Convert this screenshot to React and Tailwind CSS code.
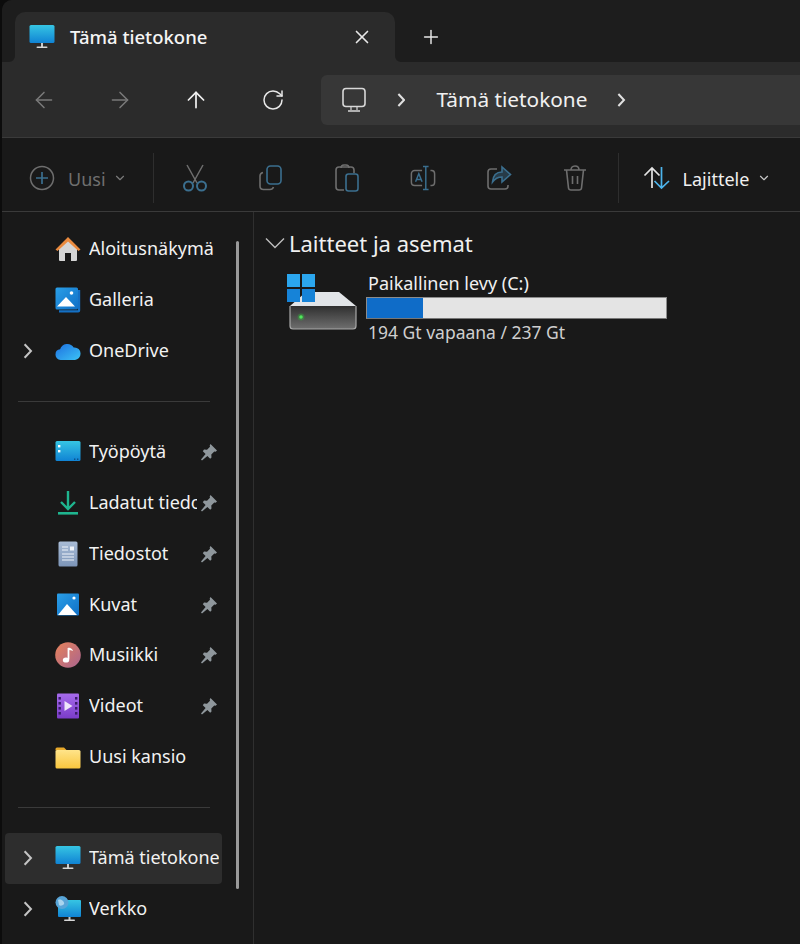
import { ArrowLeft, ArrowRight, ArrowUp, ChevronDown, Plus, RotateCw, X } from 'lucide-react'

const GRAY = '#6e6e6e'
const BLUE = '#3b6f8f'

function Defs() {
  return (
    <svg width="0" height="0" className="absolute">
      <defs>
        <linearGradient id="screen" x1="0" y1="0" x2="0" y2="1">
          <stop offset="0" stopColor="#36c5e3" />
          <stop offset="1" stopColor="#1083d4" />
        </linearGradient>
        <linearGradient id="cloud" x1="0" y1="0" x2="1" y2="1">
          <stop offset="0" stopColor="#1d6fe0" />
          <stop offset="1" stopColor="#3cc3f5" />
        </linearGradient>
        <linearGradient id="doc" x1="0" y1="0" x2="0" y2="1">
          <stop offset="0" stopColor="#a9bcd6" />
          <stop offset="1" stopColor="#7d95b8" />
        </linearGradient>
        <linearGradient id="music" x1="0" y1="0" x2="1" y2="1">
          <stop offset="0" stopColor="#e8835a" />
          <stop offset="1" stopColor="#a9648f" />
        </linearGradient>
        <linearGradient id="video" x1="0" y1="0" x2="0" y2="1">
          <stop offset="0" stopColor="#a66bec" />
          <stop offset="1" stopColor="#7b3cc9" />
        </linearGradient>
        <linearGradient id="folder" x1="0" y1="0" x2="0" y2="1">
          <stop offset="0" stopColor="#ffe48a" />
          <stop offset="1" stopColor="#f9c63e" />
        </linearGradient>
        <linearGradient id="picture" x1="0" y1="0" x2="1" y2="1">
          <stop offset="0" stopColor="#2a9fe8" />
          <stop offset="1" stopColor="#0f6fc6" />
        </linearGradient>
        <linearGradient id="driveBody" x1="0" y1="0" x2="0" y2="1">
          <stop offset="0" stopColor="#2f2f2f" />
          <stop offset="1" stopColor="#6f6f6f" />
        </linearGradient>
      </defs>
    </svg>
  )
}

function MonitorIcon({ size = 26 }) {
  return (
    <svg width={size} height={size} viewBox="0 0 26 26">
      <rect x="0.5" y="1" width="25" height="18" rx="1.5" fill="url(#screen)" />
      <rect x="12" y="19" width="2" height="4" fill="#c9c9c9" />
      <rect x="7.5" y="22.5" width="11" height="1.6" rx="0.8" fill="#d8d8d8" />
    </svg>
  )
}

function MonitorOutline() {
  return (
    <svg width="26" height="26" viewBox="0 0 26 26" fill="none" stroke="#d8d8d8">
      <rect x="2" y="1.500" width="22" height="18" rx="3" strokeWidth="1.600" />
      <path d="M10 20v3M16 20v3" strokeWidth="1.200" />
      <path d="M7 24h12" strokeWidth="1.500" />
    </svg>
  )
}

function Chevron({ height = 16, color = '#c4c4c4', width = 2 }) {
  return (
    <svg width={height * 0.6} height={height} viewBox="0 0 12 20" fill="none" stroke={color} strokeWidth={width * (20 / height)}>
      <path d="M2 1.500 10 10 2 18.500" />
    </svg>
  )
}

function HomeIcon() {
  return (
    <svg width="26" height="26" viewBox="0 0 26 26">
      <path d="M4 12 13 4l9 8v12a1 1 0 0 1-1 1h-5v-8h-6v8H5a1 1 0 0 1-1-1Z" fill="#d5d5d5" />
      <path d="M0.5 13.5 13 1l12.5 12.5-2 1.5L13 5.5 2.5 15Z" fill="#ea8a3e" />
    </svg>
  )
}

function GalleryIcon() {
  return (
    <svg width="26" height="26" viewBox="0 0 26 26">
      <path d="M23 3h2.200v20.500a2 2 0 0 1-2 2H4V23.200h19Z" fill="#1470c4" />
      <rect x="0.5" y="0.5" width="22.500" height="22" rx="1.5" fill="url(#picture)" />
      <circle cx="16.500" cy="6" r="1.800" fill="#fff" />
      <path d="M2 19.500 11 10l9 9.500Z" fill="#fff" />
    </svg>
  )
}

function CloudIcon() {
  return (
    <svg width="26" height="26" viewBox="0 0 26 26">
      <path d="M5.500 22A5.200 5.200 0 0 1 .5 16.500a5.200 5.200 0 0 1 4.600-5.200 7.500 7.500 0 0 1 13.600-1.800A6 6 0 0 1 25.500 16a6 6 0 0 1-5.500 6Z" fill="url(#cloud)" />
    </svg>
  )
}

function DesktopIcon() {
  return (
    <svg width="26" height="26" viewBox="0 0 26 26">
      <rect x="0.5" y="2" width="25" height="20" rx="1.5" fill="url(#screen)" />
      <rect x="3" y="6" width="2.400" height="2.400" fill="#fff" />
      <rect x="3" y="11" width="2.400" height="2.400" fill="#fff" />
      <rect x="19" y="19.500" width="1.400" height="1.400" fill="#0a4d85" />
      <rect x="22" y="19.500" width="1.400" height="1.400" fill="#0a4d85" />
    </svg>
  )
}

function DownloadIcon() {
  return (
    <svg width="26" height="26" viewBox="0 0 26 26">
      <path d="M13 1v17M6 12l7 7 7-7" fill="none" stroke="#1fb58f" strokeWidth="2.400" />
      <rect x="3" y="22" width="20" height="2.600" fill="#1fb58f" />
    </svg>
  )
}

function DocIcon() {
  return (
    <svg width="26" height="26" viewBox="0 0 26 26">
      <rect x="3.500" y="0.500" width="19" height="25" rx="1.500" fill="url(#doc)" />
      <path d="M7 6h6M7 9h6M7 13h12M7 16h12M7 19h12" stroke="#f0f4fa" strokeWidth="1.200" />
      <rect x="15" y="5.500" width="4" height="4" fill="#f0f4fa" />
    </svg>
  )
}

function PictureIcon() {
  return (
    <svg width="26" height="26" viewBox="0 0 26 26">
      <rect x="2" y="1.500" width="22" height="22" rx="1" fill="url(#picture)" />
      <circle cx="19" cy="6" r="1.600" fill="#fff" />
      <path d="M3 23 12 12l10 11Z" fill="#fff" />
    </svg>
  )
}

function MusicIcon() {
  return (
    <svg width="26" height="26" viewBox="0 0 26 26">
      <circle cx="13" cy="13" r="12.800" fill="url(#music)" />
      <path d="M13.500 6v11.500" stroke="#fff" strokeWidth="1.800" />
      <path d="M13.500 5.500c2.500.6 4 1.600 4.600 3.600-1.500-.8-3-1.200-4.600-1.200Z" fill="#fff" />
      <ellipse cx="11" cy="18" rx="3.200" ry="2.600" fill="#fff" />
    </svg>
  )
}

function VideoIcon() {
  return (
    <svg width="26" height="26" viewBox="0 0 26 26">
      <rect x="2" y="0.500" width="22" height="25" rx="1" fill="url(#video)" />
      {[4, 9, 14, 19].map((y) => (
        <g key={y} fill="#3b1b6b">
          <rect x="3.500" y={y} width="2.400" height="2.600" />
          <rect x="20" y={y} width="2.400" height="2.600" />
        </g>
      ))}
      <path d="M9.500 8v10l8-5Z" fill="#eee6fa" />
    </svg>
  )
}

function FolderIcon() {
  return (
    <svg width="26" height="26" viewBox="0 0 26 26">
      <path d="M0.500 5a1.500 1.500 0 0 1 1.500-1.500h7l3 3h-11.500Z" fill="#e8a92b" />
      <rect x="0.500" y="6" width="25" height="18.500" rx="1.500" fill="url(#folder)" />
    </svg>
  )
}

function NetworkIcon() {
  return (
    <svg width="26" height="26" viewBox="0 0 26 26">
      <rect x="3" y="4" width="23" height="17" rx="1" fill="url(#screen)" />
      <rect x="13.500" y="21" width="2" height="3" fill="#c9c9c9" />
      <rect x="9" y="23.500" width="11" height="1.600" rx="0.800" fill="#d8d8d8" />
      <circle cx="7" cy="6.500" r="6.500" fill="#58a5d8" />
      <path d="M3 4c2-1 4 0 5 1s2 3 0 4-3 1-4 0Z" fill="#a9d4ee" />
    </svg>
  )
}

function PinIcon() {
  return (
    <svg width="18" height="18" viewBox="0 0 18 18">
      <path d="M10.500 1 17 7.500l-1.400 1.200-1.300-.3-3 3 .2 3-1.300 1.300-2.800-2.800L2 17.500l-1-.9 4.600-5.500-2.800-2.800L4 6.600l3 .2 3-3-.3-1.300Z" fill="#8f979c" />
    </svg>
  )
}

function CutIcon() {
  return (
    <svg width="26" height="28" viewBox="0 0 26 28" fill="none" strokeWidth="1.500">
      <path d="M5 1l10 18M21 1 11 19" stroke={GRAY} />
      <circle cx="6.500" cy="22" r="4.500" stroke={BLUE} strokeWidth="2" />
      <circle cx="19.500" cy="22" r="4.500" stroke={BLUE} strokeWidth="2" />
    </svg>
  )
}

function CopyIcon() {
  return (
    <svg width="26" height="28" viewBox="0 0 26 28" fill="none" strokeWidth="1.600">
      <path d="M5 8.500C3 9 2 10 2 12v10c0 2 1.500 3.500 3.500 3.500H12c2 0 3-1 3.500-2.500" stroke={GRAY} />
      <rect x="9" y="2" width="14" height="18" rx="3.500" stroke={BLUE} />
    </svg>
  )
}

function PasteIcon() {
  return (
    <svg width="26" height="30" viewBox="0 0 26 30" fill="none" strokeWidth="1.600">
      <path d="M10 27H5c-2 0-3-1-3-3V7c0-2 1-3 3-3h12c2 0 3 1 3 3v3" stroke={GRAY} />
      <path d="M7 5c0-2 1.500-3 3-3h2c1.500 0 3 1 3 3" stroke={GRAY} />
      <rect x="12" y="11" width="12" height="17" rx="2.500" stroke={BLUE} />
    </svg>
  )
}

function RenameIcon() {
  return (
    <svg width="28" height="28" viewBox="0 0 28 28" fill="none" strokeWidth="1.600">
      <path d="M13 6H5C3 6 1.500 7.500 1.500 9.500v9C1.500 20.500 3 22 5 22h8M22 6h1.500c2 0 3 1.500 3 3.500v9c0 2-1 3.500-3 3.500H22" stroke={GRAY} />
      <path d="M14 1.500h6M17 1.500v25M14 26.500h6" stroke={BLUE} />
      <path d="M6 18 9.500 9.500 13 18M7.200 15.500h4.600" stroke={BLUE} />
    </svg>
  )
}

function ShareIcon() {
  return (
    <svg width="26" height="28" viewBox="0 0 26 28" fill="none" strokeWidth="1.600">
      <path d="M11 5H5C3 5 2 6.500 2 8v14c0 2 1 3 3 3h14c2 0 3-1 3-3v-1" stroke={GRAY} />
      <path d="M16 3v5c-6 0-9 4-9.500 10 2.500-3.500 5.500-5 9.500-5v5l8.500-7.500Z" stroke={BLUE} fill={BLUE} fillOpacity="0.4" />
    </svg>
  )
}

function TrashIcon() {
  return (
    <svg width="26" height="28" viewBox="0 0 26 28" fill="none" stroke={GRAY} strokeWidth="1.600">
      <path d="M2 6h22M9 6c0-2 1-4 4-4s4 2 4 4M4.500 6l2 18c.2 1.500 1 2 2.500 2h8c1.500 0 2.300-.5 2.500-2l2-18" />
      <path d="M10.500 12v8M15.500 12v8" />
    </svg>
  )
}

function SortIcon() {
  return (
    <svg width="28" height="26" viewBox="0 0 28 26" fill="none" strokeWidth="1.700">
      <path d="M9 23V3M1.500 10.500 9 3l7.500 7.500" stroke="#e4e4e4" />
      <path d="M18.500 2v21M11.500 16l7 7 7.500-7" stroke="#4cb4ec" />
    </svg>
  )
}

function PlusCircleIcon() {
  return (
    <svg width="26" height="26" viewBox="0 0 26 26" fill="none" strokeWidth="1.500">
      <circle cx="13" cy="13" r="11.500" stroke={GRAY} />
      <path d="M13 7v12M7 13h12" stroke={BLUE} strokeWidth="1.700" />
    </svg>
  )
}

function WindowsLogo() {
  return (
    <div className="grid grid-cols-2 gap-[1.500px] w-[28px] h-[28px]">
      <div className="bg-[#2ba6ee]" />
      <div className="bg-[#2ba6ee]" />
      <div className="bg-[#1683d8]" />
      <div className="bg-[#1683d8]" />
    </div>
  )
}

function DriveIcon() {
  return (
    <div className="relative w-[70px] h-[57px] ml-[2px] mt-[2px]">
      <svg width="70" height="57" viewBox="0 0 70 57" className="block">
        <path d="M2 32 18 18h33l17 14Z" fill="#e2e5e8" />
        <path d="M2 32h66v20a3 3 0 0 1-3 3H5a3 3 0 0 1-3-3Z" fill="url(#driveBody)" />
        <path d="M2 32v20a3 3 0 0 0 3 3h60a3 3 0 0 0 3-3V32" fill="none" stroke="#a8a8a8" strokeWidth="1.200" />
        <circle cx="13" cy="43" r="3.500" fill="#2fbf3a" fillOpacity="0.35" />
        <circle cx="13" cy="43" r="1.800" fill="#4fe85a" />
      </svg>
      <div className="absolute top-0 -left-[1px]">
        <WindowsLogo />
      </div>
    </div>
  )
}

const CMD_ICONS = [CutIcon, CopyIcon, PasteIcon, RenameIcon, ShareIcon, TrashIcon]

const QUICK = [
  { icon: HomeIcon, label: 'Aloitusnäkymä' },
  { icon: GalleryIcon, label: 'Galleria' },
  { icon: CloudIcon, label: 'OneDrive', expand: true },
]

const PINNED = [
  { icon: DesktopIcon, label: 'Työpöytä', pin: true },
  { icon: DownloadIcon, label: 'Ladatut tiedostot', pin: true },
  { icon: DocIcon, label: 'Tiedostot', pin: true },
  { icon: PictureIcon, label: 'Kuvat', pin: true },
  { icon: MusicIcon, label: 'Musiikki', pin: true },
  { icon: VideoIcon, label: 'Videot', pin: true },
  { icon: FolderIcon, label: 'Uusi kansio' },
]

const SYSTEM = [
  { icon: MonitorIcon, label: 'Tämä tietokone', expand: true, active: true },
  { icon: NetworkIcon, label: 'Verkko', expand: true },
]

function NavRow({ item }) {
  const Icon = item.icon
  return (
    <div className={`flex items-center h-[50.75px] w-[217px] rounded-[4px] ${item.active ? 'bg-[#2d2d2d]' : ''}`}>
      <div className="w-[50px] flex pl-[18px] shrink-0">
        {item.expand && <Chevron height={16} />}
      </div>
      <div className="shrink-0 w-[26px] flex justify-center"><Icon /></div>
      <span className={`ml-[8px] mb-[1px] text-[18px] text-[#f2f2f2] whitespace-nowrap overflow-hidden ${item.pin ? 'w-[108px]' : 'w-[130px]'}`}>
        {item.label}
      </span>
      {item.pin && <span className="ml-[3px]"><PinIcon /></span>}
    </div>
  )
}

function Divider() {
  return (
    <div className="h-[50.75px] flex items-center pl-[13px]">
      <div className="h-px w-[192px] bg-[#3a3a3a]" />
    </div>
  )
}

export default function App() {
  return (
    <div className="w-[800px] h-[944px] overflow-hidden bg-[#0c0c0c] pl-[2px] font-['Noto_Sans',sans-serif]">
      <Defs />
      <div className="h-full flex flex-col bg-[#191919] rounded-tl-[10px]">
        {/* Tab strip */}
        <div className="h-[62px] shrink-0 flex items-end pl-[13px] bg-[#1d1d1d] rounded-tl-[10px]">
          <div className="relative w-[380px] h-[50px] flex items-center bg-[#2b2b2b] rounded-t-[10px] pl-[14px]">
            <svg width="6" height="6" viewBox="0 0 6 6" className="absolute bottom-0 -left-[6px]">
              <path d="M6 0v6H0a6 6 0 0 0 6-6Z" fill="#2b2b2b" />
            </svg>
            <svg width="6" height="6" viewBox="0 0 6 6" className="absolute bottom-0 -right-[6px]">
              <path d="M0 0v6H6a6 6 0 0 1-6-6Z" fill="#2b2b2b" />
            </svg>
            <MonitorIcon />
            <span className="ml-[15px] text-[18.500px] font-medium text-[#f5f5f5]">Tämä tietokone</span>
            <X size={22} strokeWidth={1.800} className="ml-auto mr-[22px] text-[#e8e8e8]" />
          </div>
          <div className="h-[50px] flex items-center ml-[25px]">
            <Plus size={22} strokeWidth={1.600} className="text-[#e8e8e8]" />
          </div>
        </div>

        {/* Address bar */}
        <div className="h-[76px] shrink-0 flex items-center bg-[#2b2b2b] border-b border-[#3a3a3a] pl-[29px]">
          <ArrowLeft size={26} strokeWidth={1.400} className="text-[#7a7a7a]" />
          <ArrowRight size={26} strokeWidth={1.400} className="ml-[50px] text-[#7a7a7a]" />
          <ArrowUp size={26} strokeWidth={1.600} className="ml-[50px] text-[#f0f0f0]" />
          <RotateCw size={24} strokeWidth={1.500} className="ml-[52px] text-[#e8e8e8]" />
          <div className="ml-[36px] flex-1 h-[50px] flex items-center bg-[#373737] rounded-l-[6px] pl-[20px]">
            <MonitorOutline />
            <span className="ml-[30px]"><Chevron height={14} color="#e0e0e0" /></span>
            <span className="ml-[31px] text-[20.800px] text-[#f0f0f0]">Tämä tietokone</span>
            <span className="ml-[30px]"><Chevron height={14} color="#e0e0e0" /></span>
          </div>
        </div>

        {/* Command bar */}
        <div className="h-[74px] shrink-0 flex items-center bg-[#191919] border-b border-[#3a3a3a] pl-[27px] pt-[7px]">
          <PlusCircleIcon />
          <span className="ml-[13px] mt-[2px] text-[18px] text-[#6f6f6f]">Uusi</span>
          <ChevronDown size={14} strokeWidth={2} className="ml-[7px] text-[#7a7a7a]" />
          <div className="ml-[26px] w-px h-[50px] bg-[#2e2e2e]" />
          <div className="ml-[28px] flex items-center gap-[50px]">
            {CMD_ICONS.map((Icon, i) => (
              <div key={i} className="w-[26px] flex justify-center"><Icon /></div>
            ))}
          </div>
          <div className="ml-[30px] w-px h-[50px] bg-[#2e2e2e]" />
          <div className="ml-[24px]"><SortIcon /></div>
          <span className="ml-[12px] mt-[2px] text-[18px] text-[#f0f0f0]">Lajittele</span>
          <ChevronDown size={14} strokeWidth={2} className="ml-[8px] text-[#c8c8c8]" />
        </div>

        {/* Body */}
        <div className="flex-1 flex min-h-0">
          <div className="w-[252px] shrink-0 flex border-r border-[#2f2f2f] pl-[3px]">
            <div className="w-[217px] pt-[12px]">
              {QUICK.map((item) => <NavRow key={item.label} item={item} />)}
              <Divider />
              {PINNED.map((item) => <NavRow key={item.label} item={item} />)}
              <Divider />
              {SYSTEM.map((item) => <NavRow key={item.label} item={item} />)}
            </div>
            <div className="ml-[14px] mt-[29px] w-[3px] h-[648px] rounded-full bg-[#9a9a9a]" />
          </div>

          <div className="flex-1 pt-[14px] pl-[11px]">
            <div className="flex items-center h-[34px]">
              <svg width="20" height="12" viewBox="0 0 20 12" fill="none" stroke="#bdbdbd" strokeWidth="1.400">
                <path d="M1 1.500 10 10.500 19 1.500" />
              </svg>
              <span className="ml-[4px] text-[22px] text-[#f0f0f0]">Laitteet ja asemat</span>
            </div>
            <div className="flex mt-[12px] pl-[21px]">
              <DriveIcon />
              <div className="ml-[8px]">
                <div className="pl-[2px] h-[25px] leading-[22px] text-[18px] text-[#f0f0f0]">Paikallinen levy (C:)</div>
                <div className="w-[301px] h-[22px] bg-[#e4e4e4] border border-[#8c8c8c] border-b-[#777]">
                  <div className="h-full w-[56px] bg-[#0f6cc8]" />
                </div>
                <div className="pl-[2px] mt-[1px] h-[24px] leading-[24px] text-[17.500px] text-[#cfcfcf]">194 Gt vapaana / 237 Gt</div>
              </div>
            </div>
          </div>
        </div>
      </div>
    </div>
  )
}
